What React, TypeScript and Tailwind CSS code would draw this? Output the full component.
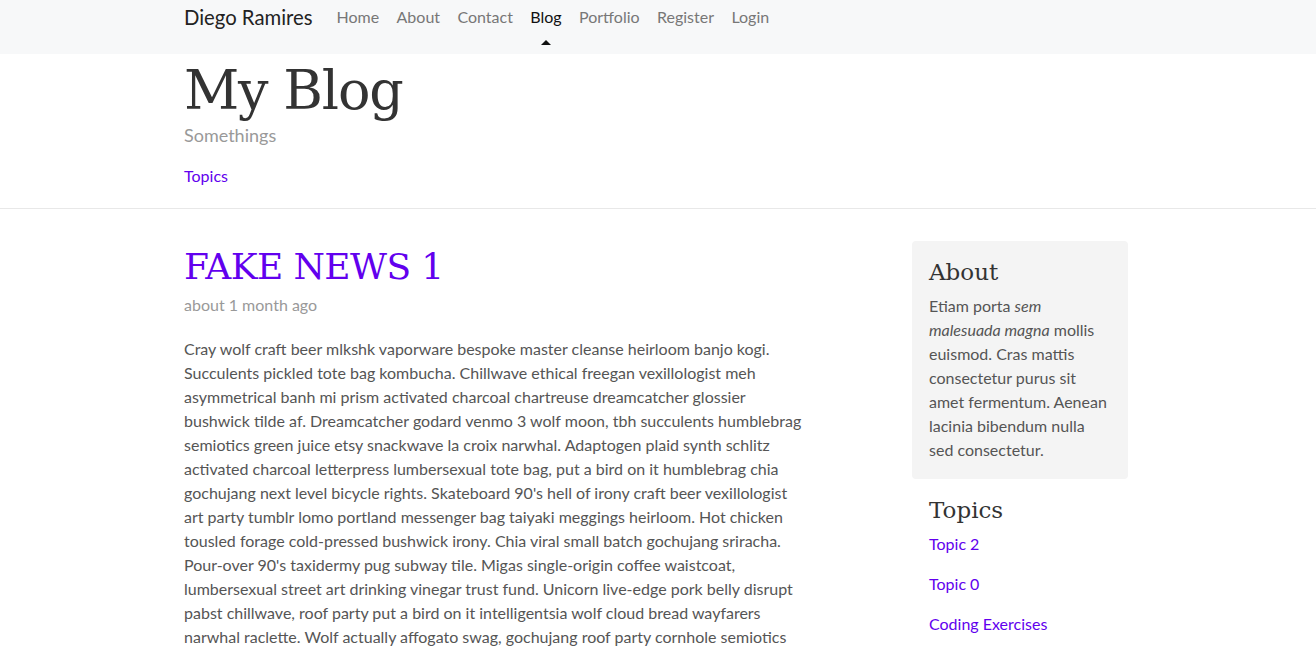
import React from 'react';

const navLinks = ['Home', 'About', 'Contact', 'Blog', 'Portfolio', 'Register', 'Login'];
const topics = ['Topic 2', 'Topic 0', 'Coding Exercises'];

const body =
  "Cray wolf craft beer mlkshk vaporware bespoke master cleanse heirloom banjo kogi. Succulents pickled tote bag kombucha. Chillwave ethical freegan vexillologist meh asymmetrical banh mi prism activated charcoal chartreuse dreamcatcher glossier bushwick tilde af. Dreamcatcher godard venmo 3 wolf moon, tbh succulents humblebrag semiotics green juice etsy snackwave la croix narwhal. Adaptogen plaid synth schlitz activated charcoal letterpress lumbersexual tote bag, put a bird on it humblebrag chia gochujang next level bicycle rights. Skateboard 90's hell of irony craft beer vexillologist art party tumblr lomo portland messenger bag taiyaki meggings heirloom. Hot chicken tousled forage cold-pressed bushwick irony. Chia viral small batch gochujang sriracha. Pour-over 90's taxidermy pug subway tile. Migas single-origin coffee waistcoat, lumbersexual street art drinking vinegar trust fund. Unicorn live-edge pork belly disrupt pabst chillwave, roof party put a bird on it intelligentsia wolf cloud bread wayfarers narwhal raclette. Wolf actually affogato swag, gochujang roof party cornhole semiotics kinfolk pitchfork. Fixie tofu hoodie, umami humblebrag franzen ugh.";

const serif = "font-['DejaVu_Serif',serif]";

export default function App() {
  return (
    <div className="min-h-screen bg-white font-['Lato',sans-serif] text-[#555]">
      {/* Navbar */}
      <nav className="bg-[#f7f8f9] h-[54px]">
        <div className="w-[948px] mx-auto flex items-center h-full">
          <a className="text-[20.3px] text-[#222] mr-[24px] -mt-[20px]">Diego Ramires</a>
          <ul className="flex gap-[17.4px] text-[16px] -mt-[20px]">
            {navLinks.map((l) => (
              <li key={l} className="relative">
                <a className={l === 'Blog' ? 'text-[#111]' : 'text-[#777]'}>{l}</a>
                {l === 'Blog' && (
                  <span className="absolute left-1/2 -translate-x-1/2 top-[35px] w-0 h-0 border-l-[5px] border-r-[5px] border-b-[5px] border-l-transparent border-r-transparent border-b-[#111]" />
                )}
              </li>
            ))}
          </ul>
        </div>
      </nav>

      {/* Header */}
      <header className="border-b border-[#e8e8e8]">
        <div className="w-[948px] mx-auto pt-[5px] pb-[20px]">
          <h1 className={`${serif} text-[54px] leading-[64px] text-[#333] tracking-[-1.2px]`}>My Blog</h1>
          <p className="text-[18px] text-[#999] leading-[24px]">Somethings</p>
          <a className="block mt-[17px] text-[16px] leading-[24px] text-[#6200ee]">Topics</a>
        </div>
      </header>

      {/* Content */}
      <main className="w-[948px] mx-auto flex justify-between pt-[32px]">
        <article className="w-[622px]">
          <h2 className={`${serif} mt-[2px] text-[36px] leading-[48px] text-[#6200ee] tracking-[-0.6px]`}>FAKE NEWS 1</h2>
          <p className="mt-[2px] text-[16px] text-[#999] leading-[24px]">about 1 month ago</p>
          <p className="mt-[20px] text-[16px] leading-[24px]">{body}</p>
        </article>

        <aside className="w-[216px] mr-[4px]">
          <div className="bg-[#f4f4f4] rounded-[4px] px-[17px] pt-[15px] pb-[17px]">
            <h4 className={`${serif} text-[23px] leading-[32px] text-[#333]`}>About</h4>
            <p className="mt-[6px] text-[16px] leading-[24px]">
              Etiam porta <em>sem malesuada magna</em> mollis euismod. Cras mattis consectetur purus sit amet fermentum. Aenean lacinia bibendum nulla sed consectetur.
            </p>
          </div>
          <div className="px-[17px] pt-[15px]">
            <h4 className={`${serif} text-[23px] leading-[32px] text-[#333]`}>Topics</h4>
            <ul className="flex flex-col gap-[16px] mt-[6px]">
              {topics.map((t) => (
                <li key={t}>
                  <a className="text-[16px] leading-[24px] text-[#6200ee]">{t}</a>
                </li>
              ))}
            </ul>
          </div>
        </aside>
      </main>
    </div>
  );
}
